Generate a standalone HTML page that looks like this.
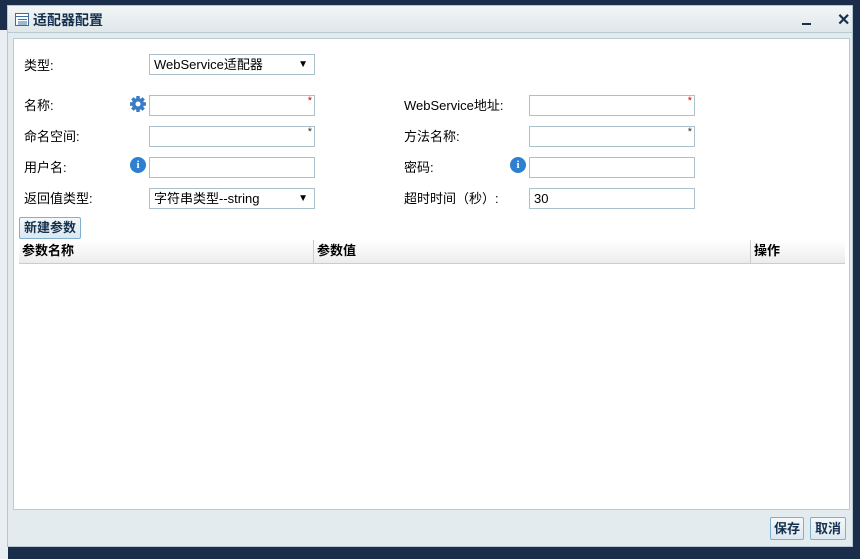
<!DOCTYPE html>
<html><head><meta charset="utf-8"><style>
*{margin:0;padding:0;box-sizing:border-box}
body{width:860px;height:559px;overflow:hidden;background:#1a2d4a;font-family:"Liberation Sans","Noto Sans CJK SC",sans-serif;font-size:12px;color:#000;position:relative}
.bgl{position:absolute;left:0;top:30px;width:8px;height:529px;background:#e8eef2}
.dlg{position:absolute;left:7px;top:5px;width:846px;height:542px;background:#e3ebef;border:1px solid #b5c7d2}
.title{position:absolute;left:0;top:0;width:844px;height:27px;background:linear-gradient(#f2f6f7,#dfe7ea);border-bottom:1px solid #b9cbd4}
.title span{position:absolute;left:25px;top:4px;font-weight:bold;font-size:14px;color:#15304e}
.content{position:absolute;left:5px;top:32px;width:837px;height:472px;background:#fff;border:1px solid #b9cbd4}
.lbl{position:absolute;font-size:13px;line-height:16px}
.inp{position:absolute;width:166px;height:21px;border:1px solid #aac0cc;background:#fff;font-size:13px;padding:0 4px;line-height:19px}
.star{position:absolute;right:2px;top:-1px;color:#d00;font-size:11px;line-height:12px}
.sel::after{content:"▼";position:absolute;right:6px;top:0;font-size:10px}
.btn{position:absolute;border:1px solid #7fb0cf;background:linear-gradient(#f4f8fa,#dce8ef);font-weight:bold;font-size:13px;color:#15304e;text-align:center;border-radius:2px}
.th{position:absolute;top:201px;height:24px;background:linear-gradient(#fff,#ececec);border-bottom:1px solid #ccc;font-weight:bold;font-size:13px;padding:2px 3px;line-height:18px}
.info{position:absolute;width:16px;height:16px;border-radius:50%;background:#2f7fd0;color:#fff;font-size:11px;font-weight:bold;text-align:center;line-height:16px;font-family:"Liberation Serif",serif}
</style></head><body>
<div class="bgl"></div>
<div class="dlg">
 <div class="title">
  <svg style="position:absolute;left:7px;top:7px" width="14" height="13"><rect x=".5" y=".5" width="13" height="12" fill="#fff" stroke="#3b6ea5"/><path d="M0 3.5h14M3 6.5h9M3 9h9M3 11h9" stroke="#3b6ea5"/></svg>
  <span>适配器配置</span>
  <div style="position:absolute;left:794px;top:17px;width:9px;height:2px;background:#15304e"></div>
  <div style="position:absolute;left:829px;top:4px;font-weight:bold;font-size:16px;color:#15304e">✕</div>
 </div>
 <div class="content">
  <div class="lbl" style="left:10px;top:19px">类型:</div>
  <div class="inp sel" style="left:135px;top:15px">WebService适配器</div>
  <div class="lbl" style="left:10px;top:59px">名称:</div>
  <svg style="position:absolute;left:115px;top:56px" width="18" height="18" viewBox="0 0 18 18"><g fill="#3a7cc4"><circle cx="9" cy="9" r="6"/><g stroke="#3a7cc4" stroke-width="3.4"><path d="M9 1v16M1 9h16M3.3 3.3l11.4 11.4M14.7 3.3L3.3 14.7"/></g></g><circle cx="9" cy="9" r="2.5" fill="#fff"/></svg>
  <div class="inp" style="left:135px;top:56px"><span class="star">*</span></div>
  <div class="lbl" style="left:390px;top:59px">WebService地址:</div>
  <div class="inp" style="left:515px;top:56px"><span class="star">*</span></div>
  <div class="lbl" style="left:10px;top:90px">命名空间:</div>
  <div class="inp" style="left:135px;top:87px"><span class="star" style="color:#333">*</span></div>
  <div class="lbl" style="left:390px;top:90px">方法名称:</div>
  <div class="inp" style="left:515px;top:87px"><span class="star" style="color:#333">*</span></div>
  <div class="lbl" style="left:10px;top:121px">用户名:</div>
  <div class="info" style="left:116px;top:118px">i</div>
  <div class="inp" style="left:135px;top:118px"></div>
  <div class="lbl" style="left:390px;top:121px">密码:</div>
  <div class="info" style="left:496px;top:118px">i</div>
  <div class="inp" style="left:515px;top:118px"></div>
  <div class="lbl" style="left:10px;top:152px">返回值类型:</div>
  <div class="inp sel" style="left:135px;top:149px">字符串类型--string</div>
  <div class="lbl" style="left:390px;top:152px">超时时间（秒）:</div>
  <div class="inp" style="left:515px;top:149px">30</div>
  <div class="btn" style="left:5px;top:178px;width:62px;height:22px;line-height:20px">新建参数</div>
  <div class="th" style="left:5px;width:295px;border-right:1px solid #ccc">参数名称</div>
  <div class="th" style="left:300px;width:437px;border-right:1px solid #ccc">参数值</div>
  <div class="th" style="left:737px;width:94px">操作</div>
 </div>
 <div class="btn" style="left:762px;top:511px;width:34px;height:23px;line-height:21px">保存</div>
 <div class="btn" style="left:802px;top:511px;width:36px;height:23px;line-height:21px">取消</div>
</div>
</body></html>
